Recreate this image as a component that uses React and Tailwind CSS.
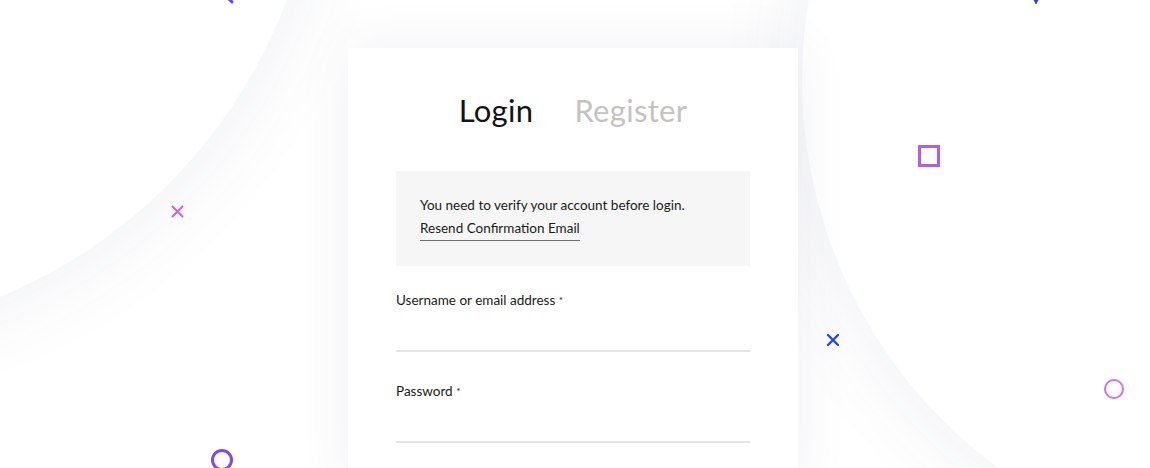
import React from 'react';

const font = { fontFamily: 'Lato, "Noto Sans", sans-serif' };

const Field = ({ label }) => (
    <div className="flex flex-col">
        <label className="text-[13.5px] text-[#1a1a1a] leading-5">
            {label} <span className="text-[10px] align-top">*</span>
        </label>
        <div className="h-[42px] border-b-2 border-[#e4e4e4]" />
    </div>
);

const App = () => {
    return (
        <div className="relative w-full h-[468px] overflow-hidden bg-white" style={font}>
            {/* Background circles */}
            <div className="absolute left-[-713px] top-[-696px] w-[1032px] h-[1032px] rounded-full bg-white shadow-[0_0_90px_rgba(70,80,120,0.09)]" />
            <div className="absolute left-[802px] top-[-402px] w-[964px] h-[964px] rounded-full bg-white shadow-[0_0_90px_rgba(70,80,120,0.09)]" />

            {/* Decorative shapes */}
            <svg className="absolute left-[222px] top-[-8px]" width="14" height="14" viewBox="0 0 14 14">
                <path d="M2 2 L10 10" stroke="#7c3aed" strokeWidth="3" strokeLinecap="round" />
            </svg>
            <svg className="absolute left-[1030px] top-[-8px]" width="12" height="12" viewBox="0 0 12 12">
                <path d="M2 2 L6 10 L10 2" stroke="#2446f2" strokeWidth="2.5" fill="none" strokeLinecap="round" />
            </svg>
            <svg className="absolute left-[171px] top-[205px]" width="13" height="13" viewBox="0 0 13 13">
                <path d="M1.5 1.5 L11.5 11.5 M11.5 1.5 L1.5 11.5" stroke="#d063dd" strokeWidth="2" strokeLinecap="round" />
            </svg>
            <div className="absolute left-[918px] top-[145px] w-[22px] h-[22px] border-[3px] border-[#b35ee6]" />
            <svg className="absolute left-[826px] top-[333px]" width="14" height="14" viewBox="0 0 14 14">
                <path d="M2 2 L12 12 M12 2 L2 12" stroke="#2346f5" strokeWidth="2.4" strokeLinecap="round" />
            </svg>
            <div className="absolute left-[1104px] top-[379px] w-[20px] h-[20px] rounded-full border-[2.5px] border-[#d270e6]" />
            <div className="absolute left-[211px] top-[449px] w-[22px] h-[22px] rounded-full border-[3px] border-[#7f45f7]" />

            {/* Card */}
            <div className="relative flex justify-center pt-[48px] pr-[4px]">
                <div className="w-[450px] bg-white px-12 pt-[42px] pb-10 shadow-[0_0_50px_rgba(60,70,110,0.08)]">
                    <div className="flex justify-center gap-[41px] text-[31px] leading-10 tracking-[0.3px]">
                        <span className="text-[#141414]">Login</span>
                        <span className="text-[#c6c2bf]">Register</span>
                    </div>

                    <div className="mt-[41px] bg-[#f6f6f6] px-6 pt-[23px] pb-[25px] text-[13.5px] leading-[23px] text-[#1a1a1a]">
                        <p>You need to verify your account before login.</p>
                        <a className="inline-block border-b-[1.5px] border-[#6f6f6f] leading-[21px] pb-[1px]">
                            Resend Confirmation Email
                        </a>
                    </div>

                    <div className="mt-[24px] flex flex-col gap-[29px]">
                        <Field label="Username or email address" />
                        <Field label="Password" />
                    </div>
                </div>
            </div>
        </div>
    );
};

export default App;
